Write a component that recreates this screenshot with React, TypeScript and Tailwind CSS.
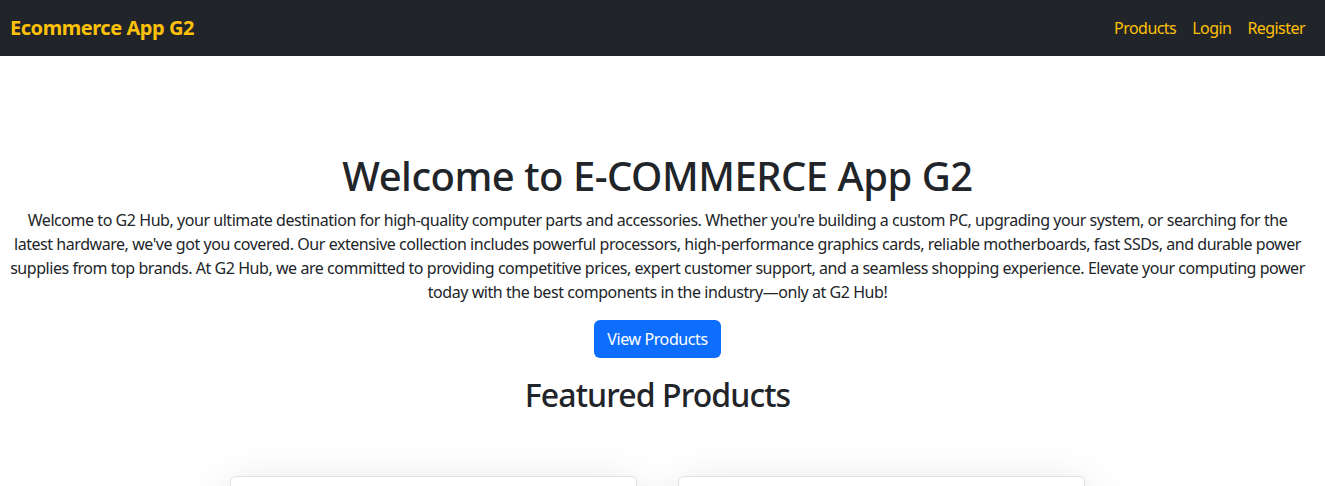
const lines = [
    "Welcome to G2 Hub, your ultimate destination for high-quality computer parts and accessories. Whether you're building a custom PC, upgrading your system, or searching for the",
    "latest hardware, we've got you covered. Our extensive collection includes powerful processors, high-performance graphics cards, reliable motherboards, fast SSDs, and durable power",
    "supplies from top brands. At G2 Hub, we are committed to providing competitive prices, expert customer support, and a seamless shopping experience. Elevate your computing power",
    "today with the best components in the industry\u2014only at G2 Hub!",
];

const navLinks = ["Products", "Login", "Register"];

function Navbar() {
    return (
        <nav className="h-14 bg-[#212529] flex items-center justify-between pl-[10px] pr-3">
            <a href="#" className="text-[20px] font-bold tracking-[-0.45px] text-[#ffc107]">Ecommerce App G2</a>
            <ul className="flex items-center">
                {navLinks.map((link) => (
                    <li key={link}>
                        <a href="#" className="px-2 text-base tracking-[-0.55px] text-[#ffc107]">{link}</a>
                    </li>
                ))}
            </ul>
        </nav>
    );
}

export default function App() {
    return (
        <div className="min-h-[486px] bg-white text-[#212529] font-['Noto_Sans',sans-serif] overflow-hidden">
            <Navbar/>
            <main className="flex flex-col items-center pl-3 pr-[22px] pt-[96px]">
                <h1 className="text-[40px] leading-[48px] font-medium tracking-[-0.5px] mb-2">Welcome to E-COMMERCE App G2</h1>
                <p className="text-base leading-6 tracking-[-0.45px] text-center mb-4">
                    {lines.map((line, i) => (
                        <span key={i} className="block whitespace-nowrap">{line}</span>
                    ))}
                </p>
                <button className="h-[38px] px-[13px] rounded-md bg-[#0d6efd] text-white text-base tracking-[-0.4px]">View Products</button>
                <h2 className="mt-[18px] text-[32px] leading-[38px] font-medium tracking-[-0.9px]">Featured Products</h2>
                <div className="mt-[62px] flex gap-[41px]">
                    <div className="w-[407px] h-[200px] border border-[#dee2e6] rounded-md bg-white shadow-[0_16px_48px_rgba(0,0,0,0.175)]"/>
                    <div className="w-[407px] h-[200px] border border-[#dee2e6] rounded-md bg-white shadow-[0_16px_48px_rgba(0,0,0,0.175)]"/>
                </div>
            </main>
        </div>
    );
}
